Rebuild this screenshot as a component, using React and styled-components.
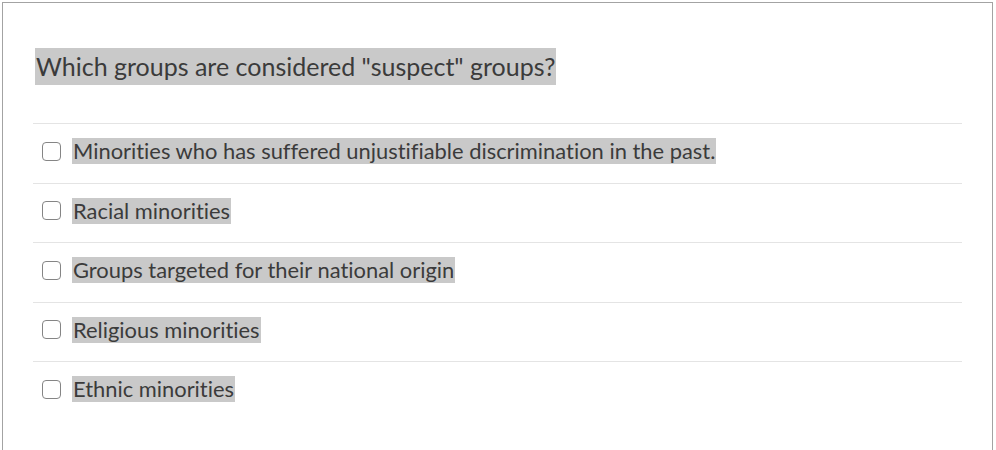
import React from "react";
import styled, { createGlobalStyle } from "styled-components";

const Global = createGlobalStyle`
  html, body { margin: 0; padding: 0; background: #fff; }
  body {
    font-family: Lato, "Open Sans", "Liberation Sans", sans-serif;
    font-variant-ligatures: no-common-ligatures;
  }
`;

const Card = styled.div`
  box-sizing: border-box;
  margin: 2px 3px 0 2px;
  height: 448px;
  border: 1px solid #a3a3a3;
  border-bottom: none;
  padding: 45px 30px 0 30px;
`;

const Title = styled.h2`
  margin: 0 0 38px 2px;
  font-weight: 400;
  font-size: 25px;
  line-height: 37px;
  height: 37px;
  color: #3b3b3b;
  white-space: nowrap;
`;

const Mark = styled.span`
  display: inline-block;
  vertical-align: top;
  background: #c9c9c9;
  padding: 0 1px;
`;

const List = styled.div`
  display: flex;
  flex-direction: column;
`;

const Option = styled.label`
  display: flex;
  align-items: center;
  gap: 11px;
  padding: 14px 0 18.5px 9px;
  border-top: 1px solid #e4e4e4;
  font-size: 21.9px;
  line-height: 26px;
  color: #3b3b3b;
  white-space: nowrap;
`;

const Box = styled.span`
  box-sizing: border-box;
  width: 19px;
  height: 19px;
  border: 1.5px solid #858585;
  border-radius: 4px;
  flex: none;
  background: #fff;
`;

const items = [
  "Minorities who has suffered unjustifiable discrimination in the past.",
  "Racial minorities",
  "Groups targeted for their national origin",
  "Religious minorities",
  "Ethnic minorities",
];

export default function App() {
  return (
    <>
      <Global />
      <Card>
        <Title>
          <Mark>Which groups are considered "suspect" groups?</Mark>
        </Title>
        <List>
          {items.map((t) => (
            <Option key={t}>
              <Box />
              <Mark>{t}</Mark>
            </Option>
          ))}
        </List>
      </Card>
    </>
  );
}
